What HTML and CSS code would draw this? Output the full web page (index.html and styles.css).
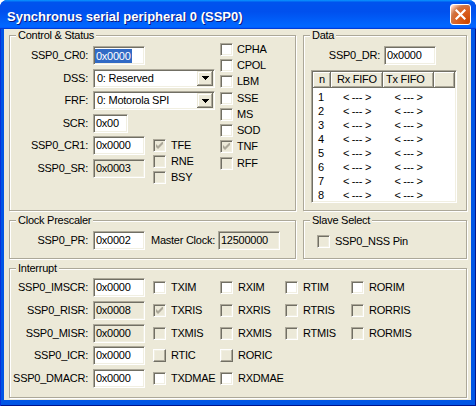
FILE: index.html
```html
<!DOCTYPE html>
<html>

<head>
  <meta charset="utf-8">
  <meta name="viewport" content="width=device-width">
  <title>Synchronus serial peripheral 0 (SSP0)</title>

  <link rel="stylesheet" href="styles.css">
</head>

<body>
  <div class="window">

    <div class="titlebar">
      <span class="titlebar__text">Synchronus serial peripheral 0 (SSP0)</span>
      <button class="close" type="button" aria-label="Close">
        <svg width="11" height="11" viewBox="0 0 11 11">
          <path d="M1.5 1.5 L9.5 9.5 M9.5 1.5 L1.5 9.5" stroke="#fff" stroke-width="2.2" stroke-linecap="square" />
        </svg>
      </button>
    </div>

    <div class="client">

      <fieldset class="group">
        <legend class="group__title">Control &amp; Status</legend>
        <div class="control">
          <div class="form">
            <span class="label">SSP0_CR0:</span>
            <span class="edit"><span class="selected">0x0000</span></span>

            <span class="label">DSS:</span>
            <span class="combo">
              <span class="combo__text">0: Reserved</span>
              <span class="combo__button">
                <svg width="7" height="4" viewBox="0 0 7 4"><path d="M0 0h7v1h-1v1h-1v1h-1v1h-1v-1h-1v-1h-1v-1h-1z" /></svg>
              </span>
            </span>

            <span class="label">FRF:</span>
            <span class="combo">
              <span class="combo__text">0: Motorola SPI</span>
              <span class="combo__button">
                <svg width="7" height="4" viewBox="0 0 7 4"><path d="M0 0h7v1h-1v1h-1v1h-1v1h-1v-1h-1v-1h-1v-1h-1z" /></svg>
              </span>
            </span>

            <span class="label">SCR:</span>
            <span class="edit edit--short">0x00</span>

            <span class="label">SSP0_CR1:</span>
            <span class="edit">0x0000</span>

            <div class="status">
              <span class="check"><span class="box box--off"><svg width="7" height="7" viewBox="0 0 7 7"><path d="M0 2 L2 4 L6 0 L7 0 L7 2 L2 7 L0 5 Z" fill="#aca899" /></svg></span>TFE</span>
              <span class="check"><span class="box box--off"></span>RNE</span>
              <span class="check"><span class="box box--off"></span>BSY</span>
            </div>

            <span class="label">SSP0_SR:</span>
            <span class="edit edit--readonly">0x0003</span>
          </div>

          <div class="flags">
            <span class="check"><span class="box"></span>CPHA</span>
            <span class="check"><span class="box"></span>CPOL</span>
            <span class="check"><span class="box"></span>LBM</span>
            <span class="check"><span class="box"></span>SSE</span>
            <span class="check"><span class="box"></span>MS</span>
            <span class="check"><span class="box"></span>SOD</span>
            <span class="check"><span class="box box--off"><svg width="7" height="7" viewBox="0 0 7 7"><path d="M0 2 L2 4 L6 0 L7 0 L7 2 L2 7 L0 5 Z" fill="#aca899" /></svg></span>TNF</span>
            <span class="check"><span class="box box--off"></span>RFF</span>
          </div>
        </div>
      </fieldset>

      <fieldset class="group">
        <legend class="group__title">Data</legend>
        <div class="data">
          <div class="data__row">
            <span class="label">SSP0_DR:</span>
            <span class="edit">0x0000</span>
          </div>

          <div class="list">
            <div class="list__head">
              <span class="list__col">n</span>
              <span class="list__col">Rx FIFO</span>
              <span class="list__col list__col--left">Tx FIFO</span>
              <span class="list__col"></span>
            </div>
            <div class="list__body">
              <div class="list__row"><span class="list__n">1</span><span>&lt; --- &gt;</span><span>&lt; --- &gt;</span></div>
              <div class="list__row"><span class="list__n">2</span><span>&lt; --- &gt;</span><span>&lt; --- &gt;</span></div>
              <div class="list__row"><span class="list__n">3</span><span>&lt; --- &gt;</span><span>&lt; --- &gt;</span></div>
              <div class="list__row"><span class="list__n">4</span><span>&lt; --- &gt;</span><span>&lt; --- &gt;</span></div>
              <div class="list__row"><span class="list__n">5</span><span>&lt; --- &gt;</span><span>&lt; --- &gt;</span></div>
              <div class="list__row"><span class="list__n">6</span><span>&lt; --- &gt;</span><span>&lt; --- &gt;</span></div>
              <div class="list__row"><span class="list__n">7</span><span>&lt; --- &gt;</span><span>&lt; --- &gt;</span></div>
              <div class="list__row"><span class="list__n">8</span><span>&lt; --- &gt;</span><span>&lt; --- &gt;</span></div>
            </div>
          </div>
        </div>
      </fieldset>

      <fieldset class="group">
        <legend class="group__title">Clock Prescaler</legend>
        <div class="prescaler">
          <span class="label">SSP0_PR:</span>
          <span class="edit">0x0002</span>
          <span class="prescaler__clock">Master Clock:</span>
          <span class="edit edit--wide edit--readonly">12500000</span>
        </div>
      </fieldset>

      <fieldset class="group">
        <legend class="group__title">Slave Select</legend>
        <div class="slave">
          <span class="check"><span class="box box--off"></span>SSP0_NSS Pin</span>
        </div>
      </fieldset>

      <fieldset class="group group--wide">
        <legend class="group__title">Interrupt</legend>
        <div class="irq">
          <span class="label">SSP0_IMSCR:</span>
          <span class="edit">0x0000</span>
          <span class="check"><span class="box"></span>TXIM</span>
          <span class="check"><span class="box"></span>RXIM</span>
          <span class="check"><span class="box"></span>RTIM</span>
          <span class="check"><span class="box"></span>RORIM</span>

          <span class="label">SSP0_RISR:</span>
          <span class="edit edit--readonly">0x0008</span>
          <span class="check"><span class="box box--off"><svg width="7" height="7" viewBox="0 0 7 7"><path d="M0 2 L2 4 L6 0 L7 0 L7 2 L2 7 L0 5 Z" fill="#aca899" /></svg></span>TXRIS</span>
          <span class="check"><span class="box box--off"></span>RXRIS</span>
          <span class="check"><span class="box box--off"></span>RTRIS</span>
          <span class="check"><span class="box box--off"></span>RORRIS</span>

          <span class="label">SSP0_MISR:</span>
          <span class="edit edit--readonly">0x0000</span>
          <span class="check"><span class="box box--off"></span>TXMIS</span>
          <span class="check"><span class="box box--off"></span>RXMIS</span>
          <span class="check"><span class="box box--off"></span>RTMIS</span>
          <span class="check"><span class="box box--off"></span>RORMIS</span>

          <span class="label">SSP0_ICR:</span>
          <span class="edit">0x0000</span>
          <span class="check"><span class="box box--raised"></span>RTIC</span>
          <span class="check"><span class="box box--raised"></span>RORIC</span>

          <span class="label">SSP0_DMACR:</span>
          <span class="edit">0x0000</span>
          <span class="check"><span class="box"></span>TXDMAE</span>
          <span class="check"><span class="box"></span>RXDMAE</span>
        </div>
      </fieldset>

    </div>
  </div>
</body>

</html>
```

FILE: styles.css
```css
:root {
  --color-face: #ece9d8;
  --color-shadow: #aca899;
  --color-dark: #716f64;
  --color-light: #f1efe2;
  --color-select: #316ac5;
  --sunken: inset 1px 1px var(--color-dark), inset -1px -1px var(--color-light);
}

* {
  box-sizing: border-box;
}

body {
  margin: 0;
  background-color: #fff;
  font-family: 'Liberation Sans', Arial, sans-serif;
  font-size: 11px;
  line-height: 13px;
  letter-spacing: -0.25px;
  color: #000;
}

.window {
  display: flex;
  flex-direction: column;
  width: 476px;
  height: 406px;
  border-radius: 8px 8px 0 0;
  background-color: #0055e5;
  box-shadow: inset 1px 0 #0831d9, inset -1px -1px #00138c;
}

.titlebar {
  display: flex;
  align-items: center;
  height: 29px;
  padding: 0 5px 0 7px;
  border-radius: 7px 7px 0 0;
  background: linear-gradient(180deg, #0997ff, #0053ee 8%, #0050ee 40%, #0066ff 88%, #0066ff 93%, #005bff 95%, #003dd7 96%, #003dd7);
}

.titlebar__text {
  margin-top: 4px;
  font-size: 13px;
  font-weight: 700;
  line-height: 15px;
  letter-spacing: 0;
  color: #fff;
  text-shadow: 1px 1px #0a1883;
}

.close {
  display: flex;
  align-items: center;
  justify-content: center;
  width: 21px;
  height: 21px;
  margin-left: auto;
  padding: 0;
  border: 1px solid #fff;
  border-radius: 3px;
  background: radial-gradient(circle at 90% 90%, #cc4600 0%, #dc6527 55%, #cd7546 70%, #ffccb2 90%, #fff 100%);
}

.client {
  flex: 1;
  display: grid;
  grid-template-columns: 287px 164px;
  grid-template-rows: 182px 45px 136px;
  gap: 3px 7px;
  margin: 0 5px 6px 4px;
  padding-left: 5px;
  background-color: var(--color-face);
}

.group {
  min-width: 0;
  margin: 0;
  padding: 0;
  border: 1px solid var(--color-shadow);
  box-shadow: inset 1px 1px #fff, 1px 1px #fff;
}

.group--wide {
  grid-column: 1 / -1;
}

.group__title {
  margin-left: 6px;
  padding: 0 2px;
  line-height: 13px;
  background-color: var(--color-face);
}

.label {
  grid-column: 1;
  padding-right: 5px;
  text-align: right;
  white-space: nowrap;
}

/* edit boxes */
.edit {
  display: flex;
  align-items: center;
  width: 52px;
  height: 19px;
  padding: 0 2px;
  border: 1px solid;
  border-color: var(--color-shadow) #fff #fff var(--color-shadow);
  background-color: #fff;
  box-shadow: var(--sunken);
  white-space: nowrap;
}

.edit--short {
  width: 35px;
}

.edit--wide {
  width: 62px;
}

.edit--readonly {
  background-color: var(--color-face);
}

.selected {
  margin-left: -1px;
  padding: 0 1px;
  line-height: 14px;
  background-color: var(--color-select);
  color: #fff;
}

.combo {
  grid-column: span 2;
  display: flex;
  align-items: center;
  width: 122px;
  height: 19px;
  border: 1px solid;
  border-color: var(--color-shadow) #fff #fff var(--color-shadow);
  background-color: #fff;
  box-shadow: var(--sunken);
}

.combo__text {
  padding-left: 3px;
  white-space: nowrap;
}

.combo__button {
  display: flex;
  align-items: center;
  justify-content: center;
  width: 16px;
  height: 15px;
  margin: 0 1px 0 auto;
  background-color: var(--color-face);
  box-shadow: inset -1px -1px var(--color-dark), inset 1px 1px var(--color-face), inset -2px -2px var(--color-shadow), inset 2px 2px #fff;
}

/* check boxes */
.check {
  display: flex;
  align-items: center;
  gap: 5px;
  white-space: nowrap;
}

.box {
  display: flex;
  align-items: center;
  justify-content: center;
  flex: none;
  width: 13px;
  height: 13px;
  border: 1px solid;
  border-color: var(--color-shadow) #fff #fff var(--color-shadow);
  background-color: #fff;
  box-shadow: var(--sunken);
}

.box--off {
  background-color: var(--color-face);
}

.box--raised {
  border-color: #fff var(--color-dark) var(--color-dark) #fff;
  background-color: var(--color-face);
  box-shadow: inset -1px -1px var(--color-shadow), inset 1px 1px var(--color-light);
}

/* control & status */
.control {
  display: flex;
}

.form {
  display: grid;
  grid-template-columns: 83px 60px 62px;
  grid-auto-rows: 19px;
  row-gap: 3.6px;
  align-items: center;
  padding-top: 4px;
}

.status {
  grid-column: 3;
  grid-row: 5 / span 2;
  align-self: start;
  height: 41px;
  padding-top: 1px;
}

.status .check {
  height: 16.2px;
}

.flags {
  display: flex;
  flex-direction: column;
  margin: -1px 0 0 5px;
}

.flags .check {
  height: 16.3px;
  gap: 4px;
}

/* data */
.data {
  padding-top: 4px;
}

.data__row {
  display: flex;
  align-items: center;
}

.data__row .label {
  width: 80px;
  padding-right: 4px;
}

.list {
  width: 146px;
  height: 133px;
  margin: 5px 0 0 7px;
  padding: 1px;
  border: 1px solid;
  border-color: var(--color-shadow) #fff #fff var(--color-shadow);
  background-color: #fff;
  box-shadow: var(--sunken);
}

.list__head,
.list__row {
  display: grid;
  grid-template-columns: 18px 52px 51px 1fr;
  text-align: center;
}

.list__head {
  height: 16px;
}

.list__col {
  line-height: 15px;
  background-color: var(--color-face);
  box-shadow: inset -1px -1px var(--color-dark), inset 1px 1px #fff, inset -2px -2px var(--color-shadow);
  white-space: nowrap;
}

.list__col--left {
  padding-left: 3px;
  text-align: left;
}

.list__body {
  padding-top: 2px;
}

.list__row {
  height: 14px;
  line-height: 14px;
}

.list__n {
  padding-left: 5px;
  text-align: left;
}

/* clock prescaler */
.prescaler {
  display: flex;
  align-items: center;
  padding-top: 4px;
}

.prescaler .label {
  width: 83px;
}

.prescaler__clock {
  margin: 0 3px 0 6px;
  white-space: nowrap;
}

/* slave select */
.slave {
  padding: 8px 0 0 13px;
}

/* interrupt */
.irq {
  display: grid;
  grid-template-columns: 83px 60px 67px 65px 66px 1fr;
  grid-auto-rows: 19px;
  row-gap: 3.75px;
  align-items: center;
  padding-top: 3px;
}
```
